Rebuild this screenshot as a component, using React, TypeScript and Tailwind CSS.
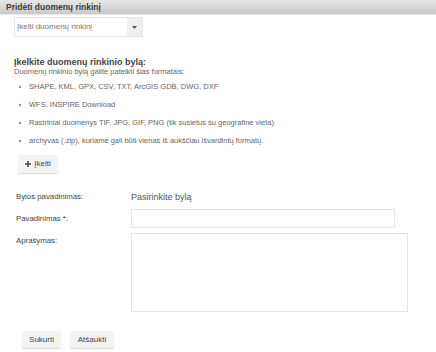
const formatai = [
  'SHAPE, KML, GPX, CSV, TXT, ArcGIS GDB, DWG, DXF',
  'WFS, INSPIRE Download',
  'Rastriniai duomenys TIF, JPG, GIF, PNG (tik susietus su geografine vieta)',
  'archyvas (.zip), kuriame gali būti vienas iš aukščiau išvardintų formatų.',
]

export default function App() {
  return (
    <div className="h-[352px] w-[436px] overflow-hidden bg-white font-['Liberation_Sans',Arial,sans-serif] text-[#555]">
      <div className="flex h-[15px] items-center border-b border-[#e8e8e8] bg-gradient-to-b from-[#e6e6e6] to-[#c9c9c9] px-[6px] text-[8.5px] font-bold text-[#3a3a3a]">
        Pridėti duomenų rinkinį
      </div>

      <div className="ml-[14px] mt-[2px] flex h-[20px] w-[129px] items-center border border-[#e6e6e6] bg-white">
        <span className="flex-1 pl-[2px] text-[8px] text-[#777]">Įkelti duomenų rinkinį</span>
        <span className="flex h-full w-[15px] items-center justify-center bg-[#f0f0f0]">
          <svg width="5" height="3" viewBox="0 0 5 3">
            <path d="M0 0h5L2.5 3z" fill="#555" />
          </svg>
        </span>
      </div>

      <div className="ml-[14px] mt-[21px]">
        <h2 className="text-[9px] font-bold leading-[9px] text-[#444]">Įkelkite duomenų rinkinio bylą:</h2>
        <p className="text-[7.5px] leading-[9px] text-[#666]">Duomenų rinkinio bylą galite pateikti šias formatais:</p>
        <ul className="mt-[6px] space-y-[9px] pl-[5px]">
          {formatai.map((f) => (
            <li key={f} className="flex items-center text-[7.5px] leading-[9px] text-[#666]">
              <span className="mr-[8px] h-[2px] w-[2px] rounded-full bg-[#666]" />
              {f}
            </li>
          ))}
        </ul>
      </div>

      <button
        type="button"
        className="ml-[18px] mt-[10px] flex h-[18px] w-[40px] items-center justify-center gap-[3px] rounded-[2px] bg-[#f3f3f3] text-[8px] text-[#444] shadow-[0_1px_1px_rgba(0,0,0,0.15)]"
      >
        <svg width="6" height="6" viewBox="0 0 6 6">
          <path d="M2.2 0h1.6v2.2H6v1.6H3.8V6H2.2V3.8H0V2.2h2.2z" fill="#3b4a5c" />
        </svg>
        Įkelti
      </button>

      <div className="ml-[16px] mt-[16px] grid grid-cols-[115px_1fr] items-start gap-y-[4px] text-[7.8px] text-[#444]">
        <span className="leading-[16px]">Bylos pavadinimas:</span>
        <span className="text-[9px] leading-[16px] text-[#555]">Pasirinkite bylą</span>
        <span className="leading-[19px]">Pavadinimas *:</span>
        <div className="h-[19px] w-[264px] border border-[#e4e4e4]" />
        <span className="pt-[3px]">Aprašymas:</span>
        <div className="mt-[1px] h-[79px] w-[277px] border border-[#e4e4e4]" />
      </div>

      <div className="ml-[22px] mt-[19px] flex gap-[9px]">
        <button type="button" className="h-[17px] w-[39px] rounded-[2px] bg-[#f3f3f3] text-[8px] text-[#444] shadow-[0_1px_1px_rgba(0,0,0,0.15)]">
          Sukurti
        </button>
        <button type="button" className="h-[17px] w-[44px] rounded-[2px] bg-[#f3f3f3] text-[8px] text-[#444] shadow-[0_1px_1px_rgba(0,0,0,0.15)]">
          Atšaukti
        </button>
      </div>
    </div>
  )
}
